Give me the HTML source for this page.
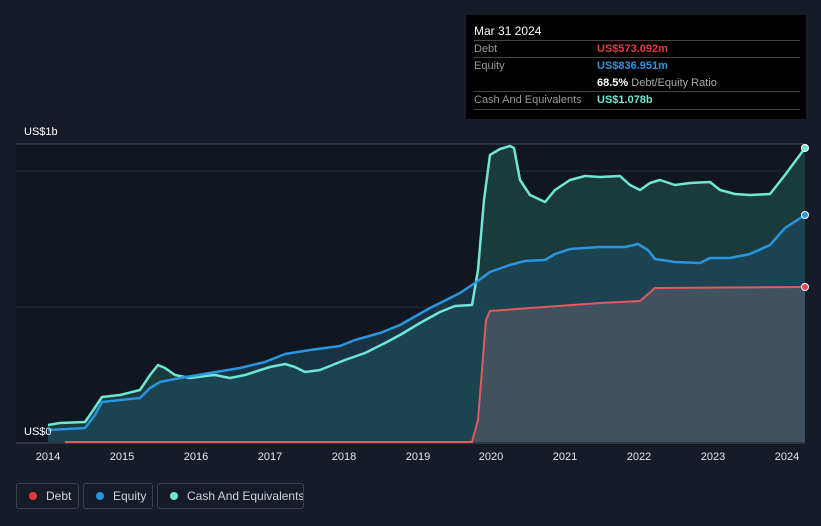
<!DOCTYPE html>
<html><head><style>
body{margin:0;width:821px;height:526px;background:#161c27;font-family:"Liberation Sans",sans-serif;overflow:hidden;position:relative}
.tt{position:absolute;left:466px;top:15px;width:340px;height:104px;background:#000;color:#fff;font-size:11px}
.tt .r{position:absolute;left:8px;width:326px;border-top:1px solid #444;height:17px;line-height:17px}
.lg{position:absolute;top:483px;height:26px;border:1px solid #3a404b;border-radius:3px;color:#cfd3da;font-size:12px;line-height:24px;box-sizing:border-box;white-space:nowrap;overflow:hidden}
.lg i{display:inline-block;width:8px;height:8px;border-radius:50%;margin:0 9px 0 12px;vertical-align:0px}
</style></head><body>
<svg width="821" height="526" style="position:absolute;left:0;top:0">
<rect x="16" y="144" width="789" height="298" fill="#111720"/>
<line x1="16" y1="144" x2="805" y2="144" stroke="#4a505b"/>
<line x1="16" y1="171" x2="805" y2="171" stroke="#262c36"/>
<line x1="16" y1="307" x2="805" y2="307" stroke="#262c36"/>
<line x1="16" y1="443" x2="805" y2="443" stroke="#4a505b"/>
<path d="M48,425 L60,423 85,422 92,412 102,397 120,395 140,390 150,375 158,365 165,368 175,375 190,378 205,376 215,375 230,378 245,375 270,367 285,364 295,367 305,372 320,370 345,360 365,353 385,343 400,335 420,323 440,312 455,306 472,305 478,270 484,200 490,155 500,149 510,146 514,148 520,180 530,195 545,202 555,190 570,180 585,176 600,177 620,176 630,185 640,190 650,183 660,180 675,185 690,183 710,182 720,190 735,194 750,195 770,194 785,175 805,148 L805,442 48,442Z" fill="#1d3e3f" fill-opacity="0.9"/>
<path d="M48,430 L85,428 95,415 102,402 120,400 140,398 150,388 160,382 180,378 210,373 240,368 265,362 285,354 310,350 340,346 355,340 380,333 400,325 430,308 460,293 475,283 490,272 510,265 525,261 545,260 555,254 570,249 600,247 625,247 638,244 648,250 655,259 675,262 700,263 710,258 730,258 750,254 770,245 785,228 805,215 L805,442 48,442Z" fill="#1d4a63" fill-opacity="0.55"/>
<path d="M472,442 L478,420 486,320 490,311 530,308 600,303 640,301 655,288 805,287 L805,442Z" fill="#4a5563" fill-opacity="0.8"/>
<path d="M48,425 L60,423 85,422 92,412 102,397 120,395 140,390 150,375 158,365 165,368 175,375 190,378 205,376 215,375 230,378 245,375 270,367 285,364 295,367 305,372 320,370 345,360 365,353 385,343 400,335 420,323 440,312 455,306 472,305 478,270 484,200 490,155 500,149 510,146 514,148 520,180 530,195 545,202 555,190 570,180 585,176 600,177 620,176 630,185 640,190 650,183 660,180 675,185 690,183 710,182 720,190 735,194 750,195 770,194 785,175 805,148" fill="none" stroke="#6ee7d3" stroke-width="2.5" stroke-linejoin="round"/>
<path d="M48,430 L85,428 95,415 102,402 120,400 140,398 150,388 160,382 180,378 210,373 240,368 265,362 285,354 310,350 340,346 355,340 380,333 400,325 430,308 460,293 475,283 490,272 510,265 525,261 545,260 555,254 570,249 600,247 625,247 638,244 648,250 655,259 675,262 700,263 710,258 730,258 750,254 770,245 785,228 805,215" fill="none" stroke="#2a95e0" stroke-width="2.5" stroke-linejoin="round"/>
<path d="M65,442 L472,442 478,420 486,320 490,311 530,308 600,303 640,301 655,288 805,287" fill="none" stroke="#e05a5e" stroke-width="2"/>
<circle cx="805" cy="148" r="3.5" fill="#6ee7d3" stroke="#fff" stroke-width="1"/>
<circle cx="805" cy="215" r="3.5" fill="#2a95e0" stroke="#fff" stroke-width="1"/>
<circle cx="805" cy="287" r="3.5" fill="#e04a4e" stroke="#fff" stroke-width="1"/>
<g fill="#fff" font-size="11" font-family="Liberation Sans">
<text x="24" y="135">US$1b</text><text x="24" y="435">US$0</text>
</g>
<g fill="#e6e8ec" font-size="11" text-anchor="middle" font-family="Liberation Sans">
<text x="48" y="460">2014</text><text x="122" y="460">2015</text><text x="196" y="460">2016</text><text x="270" y="460">2017</text><text x="344" y="460">2018</text><text x="418" y="460">2019</text><text x="491" y="460">2020</text><text x="565" y="460">2021</text><text x="639" y="460">2022</text><text x="713" y="460">2023</text><text x="787" y="460">2024</text>
</g>
</svg>
<div class="tt">
<div style="position:absolute;left:8px;top:9px;font-size:12px">Mar 31 2024</div>
<div class="r" style="top:25px"><span style="color:#999">Debt</span><span style="position:absolute;left:123px;color:#e6393f;font-weight:bold">US$573.092m</span></div>
<div class="r" style="top:42px"><span style="color:#999">Equity</span><span style="position:absolute;left:123px;color:#2a95e0;font-weight:bold">US$836.951m</span></div>
<div style="position:absolute;left:131px;top:60px;height:17px;line-height:17px"><b>68.5%</b> <span style="color:#aaa">Debt/Equity Ratio</span></div>
<div class="r" style="top:76px;border-bottom:1px solid #444"><span style="color:#999">Cash And Equivalents</span><span style="position:absolute;left:123px;color:#6ee7d3;font-weight:bold">US$1.078b</span></div>
</div>
<div class="lg" style="left:16px;width:63px"><i style="background:#e6393f"></i>Debt</div>
<div class="lg" style="left:83px;width:70px"><i style="background:#2a95e0"></i>Equity</div>
<div class="lg" style="left:157px;width:147px"><i style="background:#6ee7d3"></i>Cash And Equivalents</div>
</body></html>
